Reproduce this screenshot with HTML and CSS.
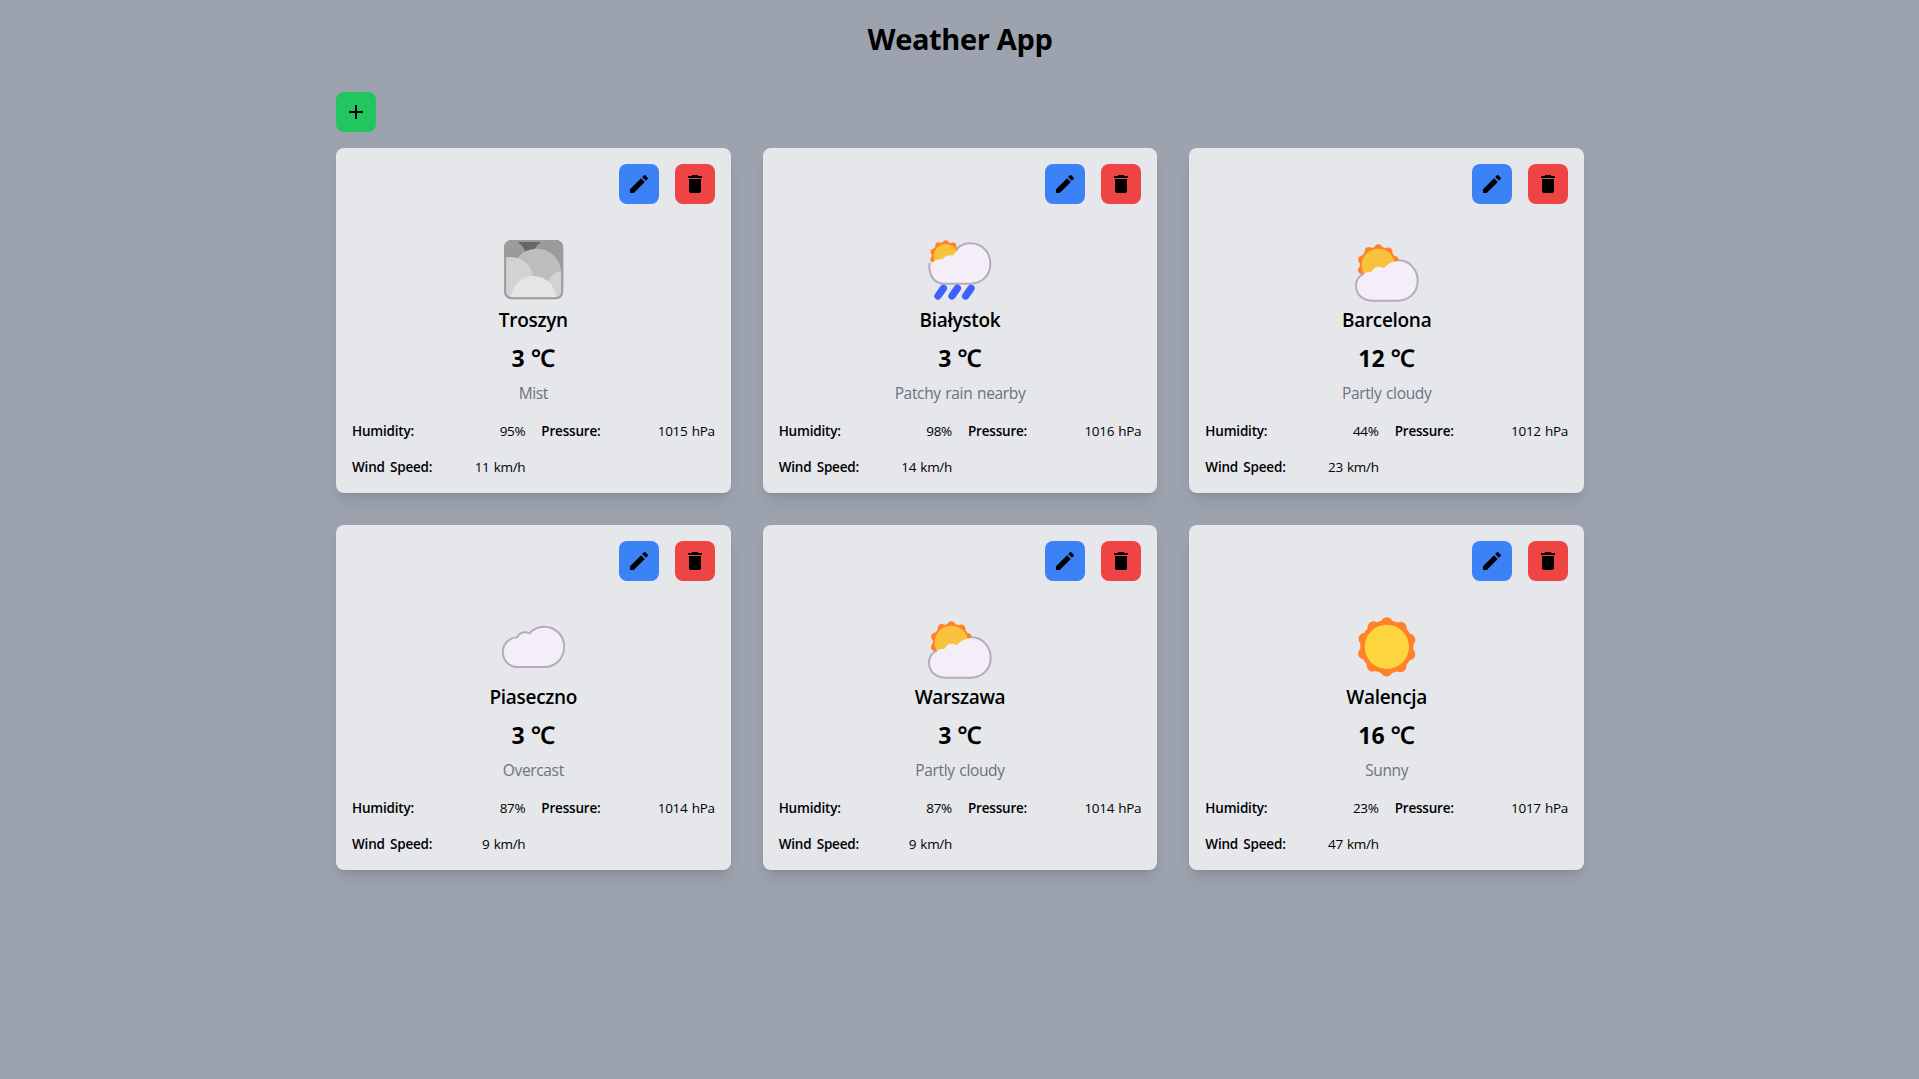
FILE: index.html
```html
<!DOCTYPE html>
<html lang="en">
<head>
<meta charset="UTF-8">
<title>Weather App</title>
<link rel="stylesheet" href="styles.css">
</head>
<body>
<svg class="sprite" aria-hidden="true">
  <symbol id="add" viewBox="0 0 24 24"><path d="M19 13h-6v6h-2v-6H5v-2h6V5h2v6h6v2z"/></symbol>
  <symbol id="edit" viewBox="0 0 24 24"><path d="M3 17.25V21h3.75L17.81 9.94l-3.75-3.75L3 17.25zM20.71 7.04c.39-.39.39-1.02 0-1.41l-2.34-2.34a.9959.9959 0 0 0-1.41 0l-1.83 1.83 3.75 3.75 1.83-1.83z"/></symbol>
  <symbol id="delete" viewBox="0 0 24 24"><path d="M6 19c0 1.1.9 2 2 2h8c1.1 0 2-.9 2-2V7H6v12zM19 4h-3.5l-1-1h-5l-1 1H5v2h14V4z"/></symbol>
  <clipPath id="mist-clip"><rect x="42" y="45" width="177" height="178" rx="23"/></clipPath>
  <symbol id="mist" viewBox="32.5 39 192 192">
    <g clip-path="url(#mist-clip)">
      <rect x="42" y="45" width="177" height="178" fill="#666"/>
      <circle cx="45" cy="108" r="68" fill="#9b9b9b"/>
      <circle cx="197" cy="112" r="76" fill="#9b9b9b"/>
      <circle cx="140" cy="145" r="74" fill="#bdbdbd"/>
      <circle cx="62" cy="164" r="68" fill="#d2d2d2"/>
      <circle cx="216" cy="184" r="45" fill="#d2d2d2"/>
      <circle cx="130" cy="221" r="68" fill="#e5e5e5"/>
    </g>
    <rect x="45" y="48" width="171" height="172" rx="20" fill="none" stroke="#9b9b9b" stroke-width="6"/>
  </symbol>
  <symbol id="rain" viewBox="40 39 192 192">
    <circle cx="93" cy="93" r="42" fill="#ff8228"/>
    <circle cx="93" cy="93" r="38" fill="none" stroke="#ff8228" stroke-width="19" stroke-linecap="round" pathLength="10" stroke-dasharray="0 1" transform="rotate(-90 93 93)"/>
    <circle cx="93" cy="93" r="36" fill="#f9c23c"/>
    <path d="M80 177a38 38 0 0 1-36-47c3-19 20-28 40-28 6-10 18-14 30-10l13-15c10-14 25-22 43-22 36 0 57 29 57 61 0 35-25 61-60 61z" fill="#f3eef8"/>
    <path d="M45 114c-5 34 12 62 43 62h79c36 0 60-26 60-60 0-34-24-61-60-61-16 0-30 6-41 17" fill="none" stroke="#b4acbc" stroke-width="6"/>
    <path d="M86 190l-16 23M128 190l-16 23M169 190l-16 23" stroke="#3f5fff" stroke-width="22" stroke-linecap="round"/>
  </symbol>
  <symbol id="partly-cloudy" viewBox="45 39 192 192">
    <circle cx="115" cy="121" r="56" fill="#ff8228"/>
    <circle cx="115" cy="121" r="51" fill="none" stroke="#ff8228" stroke-width="25" stroke-linecap="round" pathLength="10" stroke-dasharray="0 1" transform="rotate(-90 115 121)"/>
    <circle cx="115" cy="121" r="50" fill="#f9c23c"/>
    <path d="M95 227c-28 0-46-20-46-45 0-26 19-41 46-42 6-16 24-19 37-10 11-13 26-22 44-22 33 0 57 26 57 59 0 34-25 60-57 60z" fill="#f3eef8"/>
    <path d="M72 146c-15 7-24 20-24 36 0 25 20 45 47 45h79c34 0 59-26 59-60 0-33-25-61-57-61" fill="none" stroke="#b4acbc" stroke-width="6"/>
  </symbol>
  <symbol id="overcast" viewBox="33.5 45 192 192">
    <path d="M84 201c-27 0-45-20-45-45 0-24 19-43 43-44 6-14 22-19 37-12 11-13 27-20 44-20 34 0 60 27 60 60 0 35-26 61-60 61z" fill="#f3eef8" stroke="#b4acbc" stroke-width="6"/>
  </symbol>
  <symbol id="sunny" viewBox="45 45 192 192">
    <circle cx="140.5" cy="140.5" r="80" fill="#ff8228"/>
    <circle cx="140.5" cy="140.5" r="71" fill="none" stroke="#ff8228" stroke-width="36" stroke-linecap="round" pathLength="10" stroke-dasharray="0 1" transform="rotate(-90 140.5 140.5)"/>
    <circle cx="140.5" cy="140.5" r="66.5" fill="#fcd53f"/>
  </symbol>
</svg>
<main class="container">
  <h1 class="title">Weather App</h1>
  <button class="btn btn-add" aria-label="Add"><svg><use href="#add"/></svg></button>
  <div class="grid">
    <section class="card">
      <div class="actions"><button class="btn btn-edit" aria-label="Edit"><svg><use href="#edit"/></svg></button><button class="btn btn-delete" aria-label="Delete"><svg><use href="#delete"/></svg></button></div>
      <svg class="weather"><use href="#mist"/></svg>
      <h2 class="city">Troszyn</h2><p class="temp">3 <span class="unit">℃</span></p><p class="desc">Mist</p>
      <dl class="stats"><div><dt>Humidity:</dt><dd>95%</dd></div><div><dt>Pressure:</dt><dd>1015 hPa</dd></div><div><dt>Wind Speed:</dt><dd>11 km/h</dd></div></dl>
    </section>
    <section class="card">
      <div class="actions"><button class="btn btn-edit" aria-label="Edit"><svg><use href="#edit"/></svg></button><button class="btn btn-delete" aria-label="Delete"><svg><use href="#delete"/></svg></button></div>
      <svg class="weather"><use href="#rain"/></svg>
      <h2 class="city">Białystok</h2><p class="temp">3 <span class="unit">℃</span></p><p class="desc">Patchy rain nearby</p>
      <dl class="stats"><div><dt>Humidity:</dt><dd>98%</dd></div><div><dt>Pressure:</dt><dd>1016 hPa</dd></div><div><dt>Wind Speed:</dt><dd>14 km/h</dd></div></dl>
    </section>
    <section class="card">
      <div class="actions"><button class="btn btn-edit" aria-label="Edit"><svg><use href="#edit"/></svg></button><button class="btn btn-delete" aria-label="Delete"><svg><use href="#delete"/></svg></button></div>
      <svg class="weather"><use href="#partly-cloudy"/></svg>
      <h2 class="city">Barcelona</h2><p class="temp">12 <span class="unit">℃</span></p><p class="desc">Partly cloudy</p>
      <dl class="stats"><div><dt>Humidity:</dt><dd>44%</dd></div><div><dt>Pressure:</dt><dd>1012 hPa</dd></div><div><dt>Wind Speed:</dt><dd>23 km/h</dd></div></dl>
    </section>
    <section class="card">
      <div class="actions"><button class="btn btn-edit" aria-label="Edit"><svg><use href="#edit"/></svg></button><button class="btn btn-delete" aria-label="Delete"><svg><use href="#delete"/></svg></button></div>
      <svg class="weather"><use href="#overcast"/></svg>
      <h2 class="city">Piaseczno</h2><p class="temp">3 <span class="unit">℃</span></p><p class="desc">Overcast</p>
      <dl class="stats"><div><dt>Humidity:</dt><dd>87%</dd></div><div><dt>Pressure:</dt><dd>1014 hPa</dd></div><div><dt>Wind Speed:</dt><dd>9 km/h</dd></div></dl>
    </section>
    <section class="card">
      <div class="actions"><button class="btn btn-edit" aria-label="Edit"><svg><use href="#edit"/></svg></button><button class="btn btn-delete" aria-label="Delete"><svg><use href="#delete"/></svg></button></div>
      <svg class="weather"><use href="#partly-cloudy"/></svg>
      <h2 class="city">Warszawa</h2><p class="temp">3 <span class="unit">℃</span></p><p class="desc">Partly cloudy</p>
      <dl class="stats"><div><dt>Humidity:</dt><dd>87%</dd></div><div><dt>Pressure:</dt><dd>1014 hPa</dd></div><div><dt>Wind Speed:</dt><dd>9 km/h</dd></div></dl>
    </section>
    <section class="card">
      <div class="actions"><button class="btn btn-edit" aria-label="Edit"><svg><use href="#edit"/></svg></button><button class="btn btn-delete" aria-label="Delete"><svg><use href="#delete"/></svg></button></div>
      <svg class="weather"><use href="#sunny"/></svg>
      <h2 class="city">Walencja</h2><p class="temp">16 <span class="unit">℃</span></p><p class="desc">Sunny</p>
      <dl class="stats"><div><dt>Humidity:</dt><dd>23%</dd></div><div><dt>Pressure:</dt><dd>1017 hPa</dd></div><div><dt>Wind Speed:</dt><dd>47 km/h</dd></div></dl>
    </section>
  </div>
</main>
</body>
</html>
```
FILE: styles.css
```css
* { box-sizing: border-box; margin: 0; padding: 0; }
body { min-height: 100vh; padding-left: 1px; background: #9ca3af; color: #000; font-family: "Segoe UI", "Open Sans", "Noto Sans", sans-serif; }
.sprite { position: absolute; width: 0; height: 0; }
.container { width: 1280px; margin: 0 auto; padding: 16px; }
.title { height: 46px; line-height: 46px; font-size: 29px; font-weight: 700; text-align: center; margin-bottom: 30px; letter-spacing: -.35px; }
.btn { display: flex; align-items: center; justify-content: center; width: 40px; height: 40px; border: 0; border-radius: 8px; }
.btn svg { width: 24px; height: 24px; }
.btn-add { background: #22c55e; margin-bottom: 16px; }
.btn-edit { background: #3b82f6; }
.btn-delete { background: #ef4444; }
.grid { display: grid; grid-template-columns: repeat(3, 1fr); gap: 32px; }
.card { display: flex; flex-direction: column; align-items: center; height: 345px; padding: 16px; border-radius: 8px; background: #e5e7eb; box-shadow: 0 10px 15px -3px rgb(0 0 0 / .1), 0 4px 6px -4px rgb(0 0 0 / .1); }
.actions { display: flex; gap: 16px; align-self: flex-end; margin-bottom: 34px; }
.weather { width: 64px; height: 64px; flex: none; margin-bottom: 4px; }
.city { font-size: 19px; line-height: 28px; font-weight: 600; margin-bottom: 8px; letter-spacing: -.3px; }
.temp { font-size: 23px; line-height: 32px; font-weight: 700; margin-bottom: 7px; }
.unit { font-size: 24.5px; line-height: 1; font-weight: 600; }
.desc { font-size: 15.5px; line-height: 24px; color: #6b7280; margin-bottom: 16px; letter-spacing: -.35px; word-spacing: 1px; }
.stats { display: grid; grid-template-columns: 1fr 1fr; gap: 16px; width: 100%; font-size: 13.5px; line-height: 20px; }
.stats div { display: flex; justify-content: space-between; }
.stats dt { font-weight: 600; letter-spacing: -.2px; word-spacing: 2px; }
.stats dd { letter-spacing: -.3px; word-spacing: 1px; }
```
